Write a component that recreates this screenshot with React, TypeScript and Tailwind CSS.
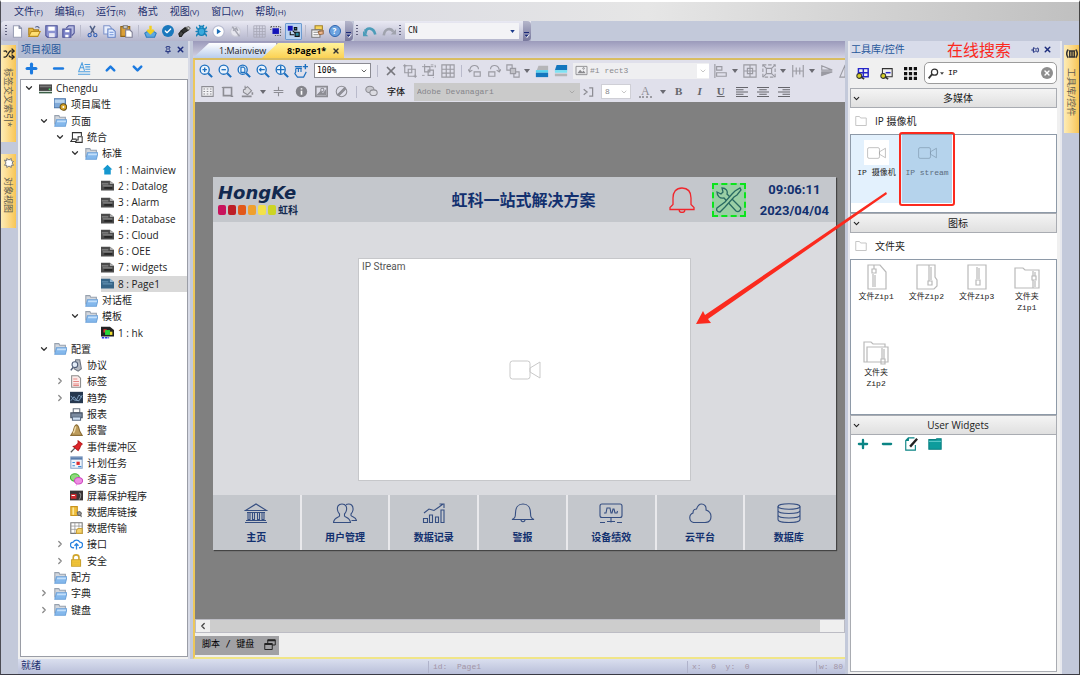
import React from 'react'
import {
  Bug,
  Check,
  ChevronDown,
  ChevronRight,
  ChevronUp,
  Minus,
  Pin,
  Plus,
  Shuffle,
  X,
} from 'lucide-react'

type IconProps = { className?: string; children?: React.ReactNode; box?: string }

// 16x16 drawing with stroke defaults, used by nearly every small icon
const Svg = ({ className = 'size-[13px]', children, box = '0 0 16 16' }: IconProps) => (
  <svg viewBox={box} className={`shrink-0 ${className}`} fill="none" stroke="currentColor" strokeWidth="1.3" aria-hidden="true">
    {children}
  </svg>
)

const ToolButton = ({ label, children, className = '' }: { label: string; children: React.ReactNode; className?: string }) => (
  <button type="button" aria-label={label} className={`flex shrink-0 items-center justify-center ${className}`}>
    {children}
  </button>
)

const Divider = () => <span className="mx-px h-3 w-px shrink-0 bg-[#b9bacb]" />

const Grip = () => (
  <span className="h-3 w-[2px] shrink-0 bg-[repeating-linear-gradient(to_bottom,#62637f_0_1px,transparent_1px_3px)]" />
)

const Caret = () => (
  <svg viewBox="0 0 6 4" className="h-1 w-[6px] shrink-0 fill-[#6b6b72]" aria-hidden="true">
    <path d="M0 0h6L3 4z" />
  </svg>
)

const Overflow = () => (
  <button type="button" aria-label="Toolbar options" className="flex h-5 w-2 shrink-0 items-end justify-center rounded-r-sm bg-gradient-to-b from-[#b5b6cb] to-[#77779c] pb-[3px]">
    <svg viewBox="0 0 6 6" className="size-[6px]" aria-hidden="true">
      <path d="M0 0h5v1H0zM0 2.500h6L3 6z" fill="#fff" />
      <path d="M0 0h5v1H0zM0 2.500h5L2.500 5z" fill="#1b2a78" />
    </svg>
  </button>
)

/* ---------- menu and main toolbar ---------- */

const menus = [
  ['文件', '(F)'],
  ['编辑', '(E)'],
  ['运行', '(R)'],
  ['格式', ''],
  ['视图', '(V)'],
  ['窗口', '(W)'],
  ['帮助', '(H)'],
]

const MenuBar = () => (
  <nav className="flex h-[19px] shrink-0 items-center gap-3 bg-gradient-to-r from-[#cfd0df] via-[#e6e6e6] via-60% to-[#c0c0c0] pl-[5px] text-[10px] text-[#23306f]">
    <span className="-mr-1">
      <Grip />
    </span>
    {menus.map(([name, key]) => (
      <button key={name} type="button" className="whitespace-nowrap">
        {name}
        <span className="text-[8px]">{key}</span>
      </button>
    ))}
  </nav>
)

const fileTools: (string | [string, React.ReactNode])[] = [
  ['New', <Svg><path d="M3 1h7l3 3v11H3z" fill="#fff" stroke="#9a9fb5" /><path d="M10 1v3h3" stroke="#6d7492" /></Svg>],
  ['Open', <Svg><path d="M1 13V4h5l1 2h6v3" fill="#e9b93f" stroke="#a87d18" /><path d="M1 14l3-6h11l-3 6z" fill="#ffdf73" stroke="#b98b1d" /><path d="M9 3c2-2 4-1 5 1" stroke="#5b6a94" /></Svg>],
  ['Save', <Svg><path d="M1 1h14v14H3l-2-2z" fill="#8c93d2" stroke="#4b5196" /><path d="M4 2h8v5H4z" fill="#fff" stroke="none" /><path d="M5 10h7v5H5z" fill="#e8e8f4" stroke="none" /></Svg>],
  ['Save all', <Svg><path d="M5 4l3-3h7v9l-3 3" fill="#b7bbe2" stroke="#4b5196" /><path d="M1 5h10v10H1z" fill="#7d84c8" stroke="#4b5196" /><path d="M4 6h5v3H4zM4 12h4v3H4z" fill="#fff" stroke="none" /></Svg>],
  '|',
  ['Cut', <Svg><path d="M5 1l5 9M11 1L6 10" stroke="#4f5f86" strokeWidth="1.800" /><circle cx="4.500" cy="12.500" r="2" stroke="#2d5db5" /><circle cx="11.500" cy="12.500" r="2" stroke="#2d5db5" /></Svg>],
  ['Copy', <Svg><path d="M1 1h7l2 2v8H1z" fill="#e8eefc" stroke="#7f93c9" /><path d="M6 5h6l3 3v7H6z" fill="#e3edff" stroke="#6080c6" /><path d="M8 9h5M8 12h5" stroke="#6c8fd8" /></Svg>],
  ['Paste', <Svg><path d="M1 2h11v12H1z" fill="#dba037" stroke="#8f6417" /><path d="M4 1h5v3H4z" fill="#ddd" stroke="#777" /><path d="M7 6h5l3 3v6H7z" fill="#fff" stroke="#7d7d94" /></Svg>],
  '|',
  ['Download', <Svg><path d="M1 10l3-2h8l3 2-2 5H3z" fill="#5fa8de" stroke="#2b7cc0" /><path d="M8 1v8M4 6l4 4 4-4" stroke="#f2cf1d" strokeWidth="3" /></Svg>],
  ['Validate', <span className="flex size-3 items-center justify-center rounded-full bg-[#1a78bd] text-white"><Check className="size-2" strokeWidth={4} /></span>],
  ['Connect', <Svg><path d="M1 11l3-4 3 3-3 4H2z" fill="#444" stroke="#222" /><path d="M4 7l5-4 4 3-6 4z" fill="#333" stroke="#222" /><path d="M10 3l3-1 2 2-2 2z" fill="#ddd" stroke="#777" /></Svg>],
  ['Debug', <Bug className="size-[14px] fill-[#3aa9dc] text-[#1681b8]" strokeWidth={2.5} />],
  ['Run', <Svg><circle cx="8" cy="8" r="7" fill="#fff" stroke="#b5b9cf" /><path d="M6 4.500l5 3.500-5 3.500z" fill="#1a6cb6" stroke="none" /></Svg>],
  ['Stop', <Svg className="size-[13px] text-[#a5a6b2]"><circle cx="8" cy="8" r="6" fill="#e6e6ee" stroke="#c9cad6" /><path d="M4 2l9 12M5 7l4-3 2 3" strokeWidth="2" /></Svg>],
  '|',
  ['Grid', <Svg className="size-[13px] text-[#a8a8b6]"><path d="M1 1h14v14H1zM4.500 1v14M8 1v14M11.500 1v14M1 4.500h14M1 8h14M1 11.500h14" strokeWidth="1" /></Svg>],
  ['Snap', <Svg><path d="M3 4h8v7H3z" fill="#1414b8" stroke="none" /><path d="M1 2h12M13 2v9M6 13h8M1 2v4" stroke="#555" strokeDasharray="1.500 1.500" /></Svg>],
  ['Objects', <span className="flex items-center rounded-[1px] border border-[#6d9bd0] bg-[#b9d3f2] p-px"><Svg><path d="M1 1h6v6H1z" fill="#1414b8" stroke="none" /><path d="M7 7l4 4M4 8v4h5" stroke="#111" /><path d="M10 9h5v5h-5zM9 3h3v3H9z" fill="#2c8aa0" stroke="#111" /></Svg></span>],
  '|',
  ['Properties', <Svg><path d="M5 1h9v5H5z" fill="#f6d45b" stroke="#a3822a" /><path d="M1 6h10v9H1z" fill="#fff" stroke="#777" /><path d="M3 9h6M3 12h6" stroke="#888" /><path d="M9 8l6-1v4l-5 1z" fill="#eeb98f" stroke="#96663f" /></Svg>],
  ['Help', <span className="flex size-3 items-center justify-center rounded-full border border-[#2e63ae] bg-[#6ba2df] text-[8px] font-bold leading-none text-white">?</span>],
]

const MainToolbar = () => (
  <div className="flex h-5 shrink-0 items-center bg-[#c3c9da]">
    <div className="flex h-5 items-center gap-1 rounded-sm bg-gradient-to-b from-[#e9e9f3] to-[#b4b5cc] pl-1">
      <Grip />
      {fileTools.map((tool, i) =>
        typeof tool === 'string' ? (
          <Divider key={i} />
        ) : (
          <ToolButton key={i} label={tool[0]} className="w-[13px]">
            {tool[1]}
          </ToolButton>
        ),
      )}
      <Overflow />
    </div>
    <div className="ml-px flex h-5 items-center gap-1 bg-gradient-to-b from-[#e9e9f3] to-[#b4b5cc] px-[2px]">
      <Grip />
      <ToolButton label="Undo" className="w-[15px]">
        <Svg className="size-[14px] text-[#4c9cb9]"><path d="M3 11V6M3 9c1-5 9-6 11 3" strokeWidth="3" /><path d="M0 8v6h6z" fill="currentColor" stroke="none" /></Svg>
      </ToolButton>
      <ToolButton label="Redo" className="w-[15px]">
        <Svg className="size-[14px] text-[#a0a3ad]"><path d="M2 13c1-8 8-9 11-4" strokeWidth="3" /><path d="M16 6v6h-6z" fill="currentColor" stroke="none" /></Svg>
      </ToolButton>
    </div>
    <div className="flex h-5 items-center gap-1 bg-gradient-to-b from-[#e9e9f3] to-[#b4b5cc] pl-px">
      <Grip />
      <label className="flex h-4 w-[114px] items-center bg-[#f3f3f6] pr-1">
        <select aria-label="Language" className="min-w-0 flex-1 appearance-none pl-[3px] font-['DejaVu_Sans_Mono',monospace] text-[8px] text-[#222] outline-none">
          <option>CN</option>
        </select>
        <svg viewBox="0 0 6 4" className="h-[3px] w-[5px] fill-[#1b3a8a]" aria-hidden="true"><path d="M0 0h6L3 4z" /></svg>
      </label>
      <Overflow />
    </div>
  </div>
)

/* ---------- project tree ---------- */

const Folder = () => (
  <Svg><path d="M1 13V2h5l1 2h7v4" fill="#d3d7dd" stroke="#97a1ae" /><path d="M3 7h13l-2 8H1z" fill="#84b8ec" stroke="#6ea3da" /><path d="M4 8h11l-.5 2h-11z" fill="#c3dffa" stroke="none" /></Svg>
)
const Server = () => (
  <Svg><path d="M0 3h16v8H0z" fill="#444" stroke="none" /><path d="M1 4.500h14v2H1z" fill="#777" stroke="none" /><path d="M0 12h16v2H0z" fill="#3c5f48" stroke="none" /><path d="M12 8h2v2h-2z" fill="#4be36b" stroke="none" /></Svg>
)
const PageProps = () => (
  <Svg><path d="M0 1h14v11H0z" fill="#7fa9d8" stroke="#4a73a6" /><path d="M1 2h12v4H1z" fill="#b8d4ef" stroke="none" /><circle cx="11.500" cy="11" r="4" fill="#d8a72e" stroke="#6b5014" /><circle cx="11.500" cy="11" r="1.200" fill="#fff" stroke="none" /></Svg>
)
const Devices = () => (
  <Svg className="size-[13px] text-[#333]"><path d="M7 13H1l2-3V2h11v4M3 10h5M10 7h5v7H7l1-3h2z" /></Svg>
)
const Home = () => <Svg><path d="M8 2l6 6h-2v6H4V8H2z" fill="#1597cf" stroke="none" /></Svg>
const Screen = () => (
  <Svg><path d="M0 2h11l5 4v8H0z" fill="#4b4b4b" stroke="none" /><path d="M11 2v4h5" fill="#aaa" stroke="none" /><path d="M1 6h8M2 8.500h12" stroke="#a9a9a9" strokeWidth="1" /><path d="M4 11h10" stroke="#222" strokeWidth="2" /></Svg>
)
const ScreenActive = () => (
  <Svg><path d="M0 2h11l5 4v8H0z" fill="#356487" stroke="none" /><path d="M11 2v4h5" fill="#8fb6d4" stroke="none" /><path d="M1 6h8M2 8.500h12" stroke="#7aa6c7" strokeWidth="1" /></Svg>
)
const Template = () => (
  <Svg><path d="M0 1h11l5 4v8H0z" fill="#222" stroke="none" /><path d="M3 4h4v4H3z" fill="#d33" stroke="none" /><path d="M5 5h6v6H5z" fill="#27d53b" stroke="none" /><path d="M11 7h3v4h-3z" fill="#eedb2f" stroke="none" /><path d="M1 14.500h9" stroke="#2b35e0" strokeWidth="2" strokeDasharray="3 1" /></Svg>
)
const Protocol = () => (
  <Svg><path d="M7 1h5l2 11-4 3-5-3z" fill="#b5bac3" stroke="#6e7580" /><circle cx="6" cy="7" r="3.500" fill="#e4edf8" stroke="#4e5c77" /><path d="M4 10l-3 4" stroke="#4e5c77" strokeWidth="2" /></Svg>
)
const TagDoc = () => (
  <Svg><path d="M2 1h8l3 3v11H2z" fill="#fbeceb" stroke="#8d8d8d" /><path d="M4 5h5M4 8h7M4 11h7M4 13h7" stroke="#e58683" /></Svg>
)
const Trend = () => (
  <Svg><path d="M0 1h16v14H0z" fill="#26384f" stroke="none" /><path d="M1 12l4-5 3 4 3-6 4 3M1 6l4 5 6 1 4-7" stroke="#8fb2d4" strokeWidth="1" /></Svg>
)
const Printer = () => (
  <Svg><path d="M4 1h8v5H4z" fill="#fff" stroke="#67717f" /><path d="M1 6h14v6H1z" fill="#7b8ba0" stroke="#455163" /><path d="M3 11h10v4H3z" fill="#cfe0f4" stroke="#5b6c84" /></Svg>
)
const BrassBell = () => (
  <Svg><path d="M8 1c3 1 3 5 4 8l3 5H1l3-5c1-3 1-7 4-8z" fill="#bd9c5b" stroke="#8d6f38" /><path d="M7 3c-1 3-1 6-3 8" stroke="#f0dcaa" strokeWidth="1.800" /></Svg>
)
const RedPin = () => (
  <Svg><path d="M10 1l5 4-2 2-1 3-2 3-6-5 3-1 3-3z" fill="#e0262b" stroke="#b8191d" /><path d="M6 10l-5 5" stroke="#555" strokeWidth="1.600" /></Svg>
)
const Schedule = () => (
  <Svg><path d="M1 1h14v14H1z" fill="#eef4fc" stroke="#8ba4c8" /><path d="M1 3h14" stroke="#5c7fae" strokeWidth="3" /><path d="M3 8h3M3 12h3M10 13h4" stroke="#3c8cd8" strokeWidth="1.500" /><path d="M8 7h4v4H8z" fill="#df2b2b" stroke="none" /></Svg>
)
const Chat = () => (
  <Svg><ellipse cx="6" cy="5.500" rx="5.500" ry="4.500" fill="#8fd97e" stroke="#3fb52f" /><ellipse cx="10.500" cy="9.500" rx="5" ry="4" fill="#ee8ee3" stroke="#cc49bd" /><path d="M8 13l-1 3 4-3" fill="#ee8ee3" stroke="none" /></Svg>
)
const Saver = () => (
  <Svg><path d="M0 2h16v12H0z" fill="#3a3435" stroke="none" /><path d="M1 6h7v6H1z" fill="#cf2b2e" stroke="none" /><path d="M2 8h4" stroke="#fff" /><path d="M11 5c3 0 3 5 0 8" stroke="#8b8b8b" /></Svg>
)
const DbLink = () => (
  <Svg><path d="M1 2h8v11H1z" fill="#f0bf3d" stroke="#c9941d" /><path d="M3 3h2v9H3z" fill="#fbe69c" stroke="none" /><path d="M9 9l3-1 2 2-1 3h-3z" fill="#999" stroke="#666" /><path d="M13 12l1 3" stroke="#666" /></Svg>
)
const Transfer = () => (
  <Svg><path d="M1 1h14v13H1z" fill="#fff" stroke="#777" /><path d="M1 5h14M6 1v13M11 1v6M1 9h8" stroke="#999" strokeWidth="1" /><path d="M8 10l2-2h5v6H8z" fill="#f5d36c" stroke="#c9a03a" /></Svg>
)
const CloudUp = () => (
  <Svg className="size-[13px] text-[#2b84e0]"><path d="M5 12H4a3.500 3.500 0 0 1 0-7 4.500 4.500 0 0 1 8 0 3.500 3.500 0 0 1 0 7h-1M8 14V7M5.500 9.500L8 7l2.500 2.500" strokeWidth="1.600" /></Svg>
)
const Lock = () => (
  <Svg><path d="M4 8V4c0-4 7-4 7 0v4" stroke="#d0a52b" strokeWidth="2" /><path d="M2 7h11v8H2z" fill="#f5c83a" stroke="#c9a02c" /><path d="M3 10h9M3 12.500h9" stroke="#e0b535" strokeWidth="1" /></Svg>
)

type Node = { level: 0 | 1 | 2 | 3 | 4; label: string; icon: React.ReactNode; open?: boolean; active?: boolean }

const tree: Node[] = [
  { level: 0, label: 'Chengdu', icon: <Server />, open: true },
  { level: 1, label: '项目属性', icon: <PageProps /> },
  { level: 1, label: '页面', icon: <Folder />, open: true },
  { level: 2, label: '统合', icon: <Devices />, open: true },
  { level: 3, label: '标准', icon: <Folder />, open: true },
  { level: 4, label: '1 : Mainview', icon: <Home /> },
  { level: 4, label: '2 : Datalog', icon: <Screen /> },
  { level: 4, label: '3 : Alarm', icon: <Screen /> },
  { level: 4, label: '4 : Database', icon: <Screen /> },
  { level: 4, label: '5 : Cloud', icon: <Screen /> },
  { level: 4, label: '6 : OEE', icon: <Screen /> },
  { level: 4, label: '7 : widgets', icon: <Screen /> },
  { level: 4, label: '8 : Page1', icon: <ScreenActive />, active: true },
  { level: 3, label: '对话框', icon: <Folder /> },
  { level: 3, label: '模板', icon: <Folder />, open: true },
  { level: 4, label: '1 : hk', icon: <Template /> },
  { level: 1, label: '配置', icon: <Folder />, open: true },
  { level: 2, label: '协议', icon: <Protocol /> },
  { level: 2, label: '标签', icon: <TagDoc />, open: false },
  { level: 2, label: '趋势', icon: <Trend />, open: false },
  { level: 2, label: '报表', icon: <Printer /> },
  { level: 2, label: '报警', icon: <BrassBell /> },
  { level: 2, label: '事件缓冲区', icon: <RedPin /> },
  { level: 2, label: '计划任务', icon: <Schedule /> },
  { level: 2, label: '多语言', icon: <Chat /> },
  { level: 2, label: '屏幕保护程序', icon: <Saver /> },
  { level: 2, label: '数据库链接', icon: <DbLink /> },
  { level: 2, label: '数据传输', icon: <Transfer /> },
  { level: 2, label: '接口', icon: <CloudUp />, open: false },
  { level: 2, label: '安全', icon: <Lock />, open: false },
  { level: 1, label: '配方', icon: <Folder /> },
  { level: 1, label: '字典', icon: <Folder />, open: false },
  { level: 1, label: '键盘', icon: <Folder />, open: false },
]

const indent = ['pl-[3px]', 'pl-[18px]', 'pl-[34px]', 'pl-[49px]', 'pl-[65px]']

const TreeRow = ({ node }: { node: Node }) => (
  <li className={`flex min-h-4 flex-1 items-center ${indent[node.level]}`}>
    <span className="flex w-[15px] shrink-0 items-center">
      {node.open === true && <ChevronDown className="size-[10px] text-[#333]" strokeWidth={3} />}
      {node.open === false && <ChevronRight className="size-[10px] text-[#888]" strokeWidth={3} />}
    </span>
    <a href="#" className={`flex flex-1 items-center gap-1 self-stretch whitespace-nowrap ${node.active ? 'bg-[#d9d9d9]' : ''}`}>
      {node.icon}
      {node.label}
    </a>
  </li>
)

const ProjectPanel = () => (
  <aside className="flex w-[172px] shrink-0 flex-col border-r-2 border-[#d8dbe6] bg-[#f0f0f0]">
    <header className="flex h-[17px] shrink-0 items-center bg-[#b3bcd3] px-[3px] text-[10px] text-[#25569a]">
      <h2 className="flex-1">项目视图</h2>
      <ToolButton label="Pin" className="mr-1"><Pin className="size-2 text-[#1c2c7c]" strokeWidth={3} /></ToolButton>
      <ToolButton label="Close"><X className="size-[9px] text-[#1c2c7c]" strokeWidth={4} /></ToolButton>
    </header>
    <div className="flex h-[21px] shrink-0 items-center gap-3 pl-[6px] text-[#1b7ae0]">
      <ToolButton label="Add"><Plus className="size-[15px]" strokeWidth={5} /></ToolButton>
      <ToolButton label="Remove"><Minus className="size-[15px]" strokeWidth={4} /></ToolButton>
      <ToolButton label="Rename">
        <Svg className="size-[13px] text-[#4d9ee0]"><path d="M1 11L5 1l3 10M3 7h4M8 3h7M9 6h6M9 9h6M0 12h15M0 15h15" /></Svg>
      </ToolButton>
      <ToolButton label="Up"><ChevronUp className="size-[15px]" strokeWidth={4} /></ToolButton>
      <ToolButton label="Down"><ChevronDown className="size-[15px]" strokeWidth={4} /></ToolButton>
    </div>
    <ul className="mb-[2px] ml-[2px] flex flex-1 flex-col border border-[#9a9da6] bg-white pb-[38px] text-[10px] leading-4 text-[#222]">
      {tree.map((node) => (
        <TreeRow key={node.label} node={node} />
      ))}
    </ul>
  </aside>
)

/* ---------- editor toolbars ---------- */

const Lens = ({ children }: { children?: React.ReactNode }) => (
  <Svg className="size-[14px] text-[#1c6fbf]">
    <circle cx="6.500" cy="6.500" r="5.200" fill="#eaf3fc" strokeWidth="1.500" />
    <path d="M10.500 10.500L15 15" strokeWidth="2.400" />
    {children}
  </Svg>
)

const zoomTools: [string, React.ReactNode][] = [
  ['Zoom in', <Lens><path d="M6.500 4v5M4 6.500h5" strokeWidth="1.500" /></Lens>],
  ['Zoom out', <Lens><path d="M4 6.500h5" strokeWidth="1.500" /></Lens>],
  ['Zoom page', <Lens><path d="M4.500 3.500h3l1.500 1.500v4.500H4.500z" /></Lens>],
  ['Previous zoom', <Lens><path d="M10 6.500H4M6 4.500l-2 2 2 2" /></Lens>],
  ['Zoom selection', <Lens><path d="M6.500 2v9M2 6.500h9" strokeWidth="1.500" /></Lens>],
  ['Pan', <Svg className="size-[14px] text-[#1c6fbf]"><path d="M1 3h8M2 5v4l-1 2 3 4h7l3-6M5 5v4M8 5v4M2 5h7M4 15h7" /><path d="M13 0v6M10 3h6" strokeWidth="1.600" /></Svg>],
]

const EditorRowOne = () => (
  <div className="flex h-[21px] items-center gap-[5px] overflow-hidden pl-1 text-[#9a9aa2]">
    <div className="flex gap-[5px]">
      {zoomTools.map(([label, icon]) => (
        <ToolButton key={label} label={label}>{icon}</ToolButton>
      ))}
    </div>
    <label className="ml-px flex h-[15px] w-[57px] shrink-0 items-center border border-[#8b8b93] bg-white pr-[2px]">
      <select aria-label="Zoom level" className="min-w-0 flex-1 appearance-none pl-[2px] font-['DejaVu_Sans_Mono',monospace] text-[8px] text-black outline-none">
        <option>100%</option>
      </select>
      <ChevronDown className="size-2 text-[#444]" strokeWidth={2.5} />
    </label>
    <Divider />
    <div className="flex gap-[5px]">
      <ToolButton label="Delete"><X className="size-[14px] text-[#77777d]" strokeWidth={3} /></ToolButton>
      <ToolButton label="Group"><Svg className="size-[14px]"><path d="M2 2h8v8H2zM6 6h8v8H6z" /><path d="M0 2h4M2 0v4M12 14h4M14 12v4" strokeWidth="1" /></Svg></ToolButton>
      <ToolButton label="Ungroup"><Svg className="size-[14px]"><path d="M3 3h6v6H3zM7 7h6v6H7z" /><path d="M0 3h16M3 0v6M13 10v6M0 13h4M10 1h5v4" strokeWidth="1" strokeDasharray="3 2" /></Svg></ToolButton>
      <ToolButton label="Table"><Svg className="size-[14px]"><path d="M1 1h14v14H1zM6 1v14M10.500 1v14M1 6h14M1 10.500h14" /></Svg></ToolButton>
    </div>
    <Divider />
    <div className="flex gap-[5px]">
      <ToolButton label="Rotate left"><Svg className="size-[14px]"><path d="M2 8c0-8 10-8 10-2M0 6l2 3 3-2M7 9h7v5H7z" /></Svg></ToolButton>
      <ToolButton label="Rotate right"><Svg className="size-[14px]"><path d="M14 8c0-8-10-8-10-2M16 6l-2 3-3-2M2 9h7v5H2z" /></Svg></ToolButton>
    </div>
    <ToolButton label="Order" className="gap-1"><Svg className="size-[14px]"><path d="M1 1h6v6H1zM9 9h6v6H9z" /><path d="M5 5h6v6H5z" fill="#c2c2c8" /></Svg><Caret /></ToolButton>
    <div className="flex gap-[5px]">
      <ToolButton label="Bring to front"><Svg className="size-[14px]"><path d="M4 2h11v5H2z" fill="#b5b5b8" stroke="none" /><path d="M1 7h14v3H1z" fill="#55d3ee" stroke="none" /><path d="M1 10h14v5H1z" fill="#1477be" stroke="none" /></Svg></ToolButton>
      <ToolButton label="Send to back"><Svg className="size-[14px]"><path d="M3 1h12v6H1z" fill="#1477be" stroke="none" /><path d="M1 7h14v3H1z" fill="#7fe2f2" stroke="none" /><path d="M1 11h14v3H1z" fill="#b5b5b8" stroke="none" /></Svg></ToolButton>
    </div>
    <label className="flex h-4 w-[136px] shrink-0 items-center bg-[#efeff1] pl-[2px]">
      <Svg className="h-[11px] w-[13px] text-[#8a8a8e]"><path d="M0 2h16v12H0z" /><path d="M2 12l4-5 3 3 2-2 3 4z" fill="currentColor" stroke="none" /><circle cx="11" cy="5" r="1.200" /></Svg>
      <select aria-label="Widget" className="min-w-0 flex-1 appearance-none pl-[2px] font-['Liberation_Mono',monospace] text-[8px] text-[#8a8a8e] outline-none">
        <option>#1 rect3</option>
      </select>
      <span className="flex h-[14px] w-3 items-center justify-center bg-white"><ChevronDown className="size-2 text-[#aaa]" /></span>
    </label>
    <ToolButton label="Align" className="gap-1"><Svg className="size-[14px]"><path d="M1 0v16M3 3h6v4H3zM3 10h11v4H3z" /></Svg><Caret /></ToolButton>
    <div className="flex gap-[5px]">
      <ToolButton label="Center"><Svg className="size-[14px]"><path d="M1 1h14v14H1zM8 1v14M1 8h14M5 5h6v6H5z" /></Svg></ToolButton>
      <ToolButton label="Same size" className="gap-1"><Svg className="size-[14px]"><path d="M1 1h14v14H1z" strokeDasharray="4 2" /><path d="M5 5h6v6H5zM1 1l4 4M15 1l-4 4M1 15l4-4M15 15l-4-4" /></Svg><Caret /></ToolButton>
    </div>
    <ToolButton label="Spacing" className="gap-1"><Svg className="size-[14px]"><path d="M2 1v14M6 4v8M10 4v8M14 1v14M2 8h12" /></Svg><Caret /></ToolButton>
    <ToolButton label="Flip horizontal"><Svg className="size-[14px]"><path d="M2 2l12 5H2z" /><path d="M2 13l12-4H2z" fill="currentColor" /></Svg></ToolButton>
    <ToolButton label="Flip vertical"><Svg className="size-[14px]"><path d="M7 1v14H1zM10 1v14h5z" /></Svg></ToolButton>
  </div>
)

const Lines = ({ d }: { d: string }) => (
  <Svg className="size-3 text-[#66666c]"><path d={d} strokeWidth="1.500" /></Svg>
)

const EditorRowTwo = () => (
  <div className="flex h-[21px] items-center gap-[7px] overflow-hidden pl-[6px] text-[#8d8d94]">
    <ToolButton label="Grid"><Svg><path d="M1 2h14v12H1z" fill="#f2f2f5" /><path d="M3 5h10M3 8h10M3 11h10" strokeDasharray="2 2" /></Svg></ToolButton>
    <ToolButton label="Shape"><Svg><path d="M3 3h10v10H3z" strokeWidth="2" /><path d="M1 3h3M12 14h3" /></Svg></ToolButton>
    <ToolButton label="Fill" className="gap-[6px]"><Svg><path d="M3 6l5-4 5 5-5 5-5-3zM5 1v5" fill="#dadadf" /><path d="M14 9v3M1 14h12" strokeWidth="2" /></Svg><Caret /></ToolButton>
    <ToolButton label="Line"><Svg className="size-[11px]"><path d="M1 6.500h14M1 9.500h14M8 1v5M8 10v5" strokeWidth="1.600" /></Svg></ToolButton>
    <ToolButton label="Info" className="ml-1"><Svg><circle cx="8" cy="8" r="7" fill="#85858c" stroke="none" /><path d="M8 7v5M8 4v1.500" stroke="#fff" strokeWidth="2" /></Svg></ToolButton>
    <ToolButton label="Image"><Svg><path d="M1 2h14v12H1z" strokeWidth="2" /><path d="M3 12l4-4 3 3 3-4v5z" fill="currentColor" /><circle cx="9" cy="6" r="2" /></Svg></ToolButton>
    <ToolButton label="Hide"><Svg><circle cx="8" cy="8" r="6.500" /><path d="M3 12L12 3l1 2-8 8z" fill="currentColor" /></Svg></ToolButton>
    <Divider />
    <ToolButton label="Language"><Svg><ellipse cx="6" cy="5.500" rx="5" ry="4" fill="#c9c9cf" /><ellipse cx="10.500" cy="9.500" rx="4.500" ry="3.500" fill="#dcdce2" /></Svg></ToolButton>
    <label htmlFor="font" className="mx-[2px] shrink-0 text-[9px] font-medium text-[#222]">字体</label>
    <div className="flex h-[18px] w-[166px] shrink-0 items-center bg-[#cacaca] pr-1">
      <select id="font" className="min-w-0 flex-1 appearance-none pl-[3px] font-['Liberation_Mono',monospace] text-[8px] text-[#85858a] outline-none">
        <option>Adobe Devanagari</option>
      </select>
      <ChevronDown className="size-2 text-[#999]" />
    </div>
    <ToolButton label="Font size" className="-ml-1"><Svg className="h-3 w-[11px]"><path d="M1 4l5 4-5 4M9 2h5v12H9" strokeWidth="1.800" /></Svg></ToolButton>
    <label className="flex h-[15px] w-[30px] shrink-0 items-center border border-[#cfcfd6] bg-white pr-[2px]">
      <select aria-label="Size" className="min-w-0 flex-1 appearance-none pl-[3px] font-['Liberation_Mono',monospace] text-[8px] text-[#85858a] outline-none">
        <option>8</option>
      </select>
      <ChevronDown className="size-2 text-[#aaa]" />
    </label>
    <ToolButton label="Text color" className="ml-px gap-2 font-['Liberation_Serif',serif] text-[12px]">
      <span className="border-b-2 border-dotted border-[#9c9ca3] px-[2px] leading-[10px]">A</span>
      <Caret />
    </ToolButton>
    <div className="flex items-center gap-[9px] font-['Liberation_Serif',serif] text-[11px] font-bold text-[#66666c]">
      <ToolButton label="Bold" className="w-3">B</ToolButton>
      <ToolButton label="Italic" className="w-3 italic">I</ToolButton>
      <ToolButton label="Underline" className="w-3 underline">U</ToolButton>
      <ToolButton label="Align left"><Lines d="M0 2h16M0 5h10M0 8h16M0 11h10M0 14h16" /></ToolButton>
      <ToolButton label="Align center"><Lines d="M0 2h16M3 5h10M0 8h16M3 11h10M0 14h16" /></ToolButton>
      <ToolButton label="Align right"><Lines d="M0 2h16M6 5h10M0 8h16M6 11h10M0 14h16" /></ToolButton>
    </div>
  </div>
)

/* ---------- designed page ---------- */

const squares = ['bg-[#c8145c]', 'bg-[#bd1f27]', 'bg-[#e2591b]', 'bg-[#efa02e]', 'bg-[#f3e14a]', 'bg-[#ccd424]']

const Thin = ({ children }: { children: React.ReactNode }) => (
  <svg viewBox="0 0 24 20" className="h-5 w-6 opacity-80" fill="none" stroke="currentColor" strokeWidth="1.100" aria-hidden="true">
    {children}
  </svg>
)

const navTiles: [string, React.ReactNode][] = [
  ['主页', <Thin><path d="M1.500 7.500L12 1l10.500 6.500zM1 19.500h22M2 17.500h20M3 9.500h18M4 9.500v7h2v-7M8.500 9.500v7h2v-7M13.500 9.500v7h2v-7M18 9.500v7h2v-7" /></Thin>],
  ['用户管理', <Thin><path d="M9 1c-4 0-5 3-4.500 6 .3 2 1 3 2 4v2c-1 1.500-5.500 1.500-6 6.500h17c-.5-5-5-5-6-6.500v-2c1-1 1.700-2 2-4C14 4 13 1 9 1z" /><path d="M13 1.500c5-1.500 7.500 1 7 5.500-.3 2-1 3-2 4v1.500c1 1.500 5 1.500 5.500 5h-5" /></Thin>],
  ['数据记录', <Thin><path d="M1.500 15.500h4v4h-4zM7.500 12h3v7.500h-3zM13.500 14h3v5.500h-3zM19 7h3v12.500h-3zM2 10l5-4 5 1.500 5-3.500 4-3M17.500 1H22v4" /></Thin>],
  ['警报', <Thin><path d="M1 16.500c2.500-1 3.500-2 3.500-6.500C4.500 5 7 1 12 1s7.500 4 7.500 9c0 4.500 1 5.500 3.500 6.500zM10 16.500c0 3 4 3 4 0" /></Thin>],
  ['设备绩效', <Thin><rect x="1" y="1" width="22" height="13.500" rx="2" /><path d="M5 10h2l1-5h3l1 5h1l1-4h1l1 4h2l.5-2M12 14.500v5M8 18.500h8M1 19.500h5M18 19.500h5" /></Thin>],
  ['云平台', <Thin><path d="M5.500 19.500a5 5 0 0 1-.5-9.500c0-2.500 1.500-4 3.500-4C10 2 12 1 13.500 1c3 0 5 2.500 4.500 6 3 1 5 3 5 6.500 0 4-2.500 6-6 6z" /></Thin>],
  ['数据库', <Thin><ellipse cx="12" cy="3.500" rx="11" ry="2.700" /><path d="M1 3.500v13c0 4 22 4 22 0v-13M1 7.500c0 4 22 4 22 0M1 12c0 4 22 4 22 0" /></Thin>],
]

const Camera = ({ className }: { className: string }) => (
  <svg viewBox="0 0 32 20" className={className} fill="none" stroke="currentColor" aria-hidden="true">
    <rect x="1" y="1" width="20" height="18" rx="2.500" />
    <path d="M21 8l10-6v16l-10-6z" strokeLinejoin="round" />
  </svg>
)

const DesignedPage = () => (
  <section className="mr-[9px] ml-[18px] flex flex-col bg-[#dadbdf] text-[#12306f] shadow-[1px_1px_1px_#444]">
    <header className="flex h-[45px] items-center bg-[#c4c7cc] pl-[5px]">
      <div className="flex flex-1 flex-col gap-[2px] text-[#12294f]">
        <span className="font-['DejaVu_Sans',sans-serif] text-[18px] leading-[18px] font-bold italic">HongKe</span>
        <div className="flex items-center gap-[2px]">
          {squares.map((color) => (
            <span key={color} className={`h-[10px] w-2 rounded-[2px] ${color}`} />
          ))}
          <span className="text-[10px] leading-[12px] font-bold">虹科</span>
        </div>
      </div>
      <h1 className="text-[16px] font-bold">虹科一站式解决方案</h1>
      <div className="flex flex-1 items-center justify-end pr-[7px]">
        <svg viewBox="0 0 26 26" className="size-[26px] text-[#f0262c]" fill="none" stroke="currentColor" strokeWidth="1.300" aria-hidden="true">
          <path d="M1 22.500v-2l3-3V11c0-6 3-10 9-10s9 4 9 10v6.500l3 3v2zM10 22.500c0 4 6 4 6 0" />
        </svg>
        <div className="ml-[17px] flex size-[34px] items-center justify-center border-2 border-dashed border-[#0be41c] bg-[#9bcfa5]">
          <svg viewBox="0 0 26 26" className="size-[26px] text-[#2a6a63]" fill="none" stroke="currentColor" strokeWidth="1.300" aria-hidden="true">
            <path d="M1 5l4 2 2-2-1-4c4 0 6 3 5 6l13 13c2 2-1 6-4 4L8 11C4 12 1 9 1 5z" />
            <path d="M24 1l1 2-4 5-3 2-9 10-5 5c-3 0-4-2-3-4l8-6 7-8 3-3z" fill="#9bcfa5" />
          </svg>
        </div>
        <div className="ml-[14px] text-center font-['Roboto',sans-serif] text-[13px] leading-[21px] font-bold">
          <p>09:06:11</p>
          <p>2023/04/04</p>
        </div>
      </div>
    </header>
    <div className="px-[145px] pt-9 pb-[14px]">
      <div className="flex h-[223px] flex-col border border-[#c6c7ca] bg-white text-[#c9c9c9]">
        <p className="h-4 px-[3px] font-['Roboto',sans-serif] text-[10px] leading-4 text-[#555]">IP Stream</p>
        <div className="flex flex-1 items-center justify-center pb-4">
          <Camera className="h-5 w-8" />
        </div>
      </div>
    </div>
    <nav className="flex h-[55px] bg-[#c4c7cc] pr-1">
      {navTiles.map(([label, icon]) => (
        <a key={label} href="#" className="flex flex-1 flex-col items-center gap-[6px] border-r-2 border-[#e9e9ec] pt-2 text-[10px] leading-4 font-bold last:border-r-0">
          {icon}
          {label}
        </a>
      ))}
    </nav>
  </section>
)

const Editor = () => (
  <main className="flex min-w-0 flex-1 flex-col">
    <div className="flex h-[17px] shrink-0 items-end bg-gradient-to-b from-[#9b9abb] to-[#d5d4e4] text-[9px] leading-[15px]">
      <button type="button" className="h-[15px] w-[83px] bg-gradient-to-b from-white to-[#b9cdec] pl-[26px] text-left text-[#222] [clip-path:polygon(16px_0,100%_0,100%_100%,0_100%)]">
        1:Mainview
      </button>
      <div className="-ml-[14px] flex h-[15px] w-[82px] items-center justify-between bg-gradient-to-b from-[#fff39a] to-[#fbd152] pr-1 pl-[25px] [clip-path:polygon(16px_0,100%_0,100%_100%,0_100%)]">
        <button type="button" className="font-bold text-black">8:Page1*</button>
        <ToolButton label="Close tab"><X className="size-2 text-[#333]" strokeWidth={4} /></ToolButton>
      </div>
    </div>
    <div className="flex min-h-0 flex-1 flex-col border-y-2 border-l-2 border-t-[#d9bd62] border-b-[#f0e588] border-l-[#ecc75a] bg-[#efefef]">
      <div className="bg-[#e0e0eb]">
        <EditorRowOne />
        <EditorRowTwo />
      </div>
      <div className="flex-1 bg-[#808080] pt-[75px]">
        <DesignedPage />
      </div>
      <div className="flex h-[14px] shrink-0 items-center border border-[#bcbcc4] bg-[#efefef] pr-6">
        <ToolButton label="Scroll left" className="w-[14px]"><ChevronRight className="size-[10px] rotate-180 text-[#444]" strokeWidth={3} /></ToolButton>
        <span className="h-full flex-1 bg-[#cdcdcd]" />
      </div>
      <div className="flex h-6 shrink-0 items-center">
        <button type="button" className="flex h-[19px] items-center gap-[10px] bg-[#a1a1a4] pr-[3px] pl-[7px] font-['DejaVu_Sans_Mono','Noto_Sans_CJK_SC',monospace] text-[9px] text-black">
          脚本 / 键盘
          <Svg className="size-3 text-[#222]"><path d="M5 6V1h10v7h-4M1 6h10v8H1z" /><path d="M1 7h10M5 2h10" strokeWidth="2" /></Svg>
        </button>
      </div>
    </div>
  </main>
)

/* ---------- widget gallery ---------- */

const galleryIcons: [string, React.ReactNode][] = [
  ['文件Zip1', <path d="M5 1h12l6 7v17H5zM11 1v4M9 5h4v4H9zM10 10v13M12 11v12" />],
  ['文件Zip2', <path d="M4 1h18v12l2 3v6l-3 3H4zM16 1v16M18 3v13M15 17h4v4h-4z" />],
  ['文件Zip3', <path d="M4 1h18v24H4zM13 3v12M15 4v11M12 16h4v5h-4z" />],
  ['文件夹Zip1', <path d="M1 4h8l2 2h14v18H1zM19 7v5M21 8v4M18 12h4v4h-4zM19 16v8M21 17v6" />],
  ['文件夹Zip2', <path d="M5 22H1V2h7l2 2h12v3M4 7h21v15H4zM19 8v11M21 9v10M18 19h4v5h-4z" />],
]

const SectionHeader = ({ title }: { title: string }) => (
  <button type="button" className="flex h-5 w-full shrink-0 items-center border border-[#a9acb2] bg-gradient-to-b from-[#f4f4f4] to-[#e0e0e0] px-px text-[10px] text-[#222]">
    <ChevronDown className="size-[9px]" strokeWidth={3} />
    <span className="flex-1">{title}</span>
  </button>
)

const Category = ({ name }: { name: string }) => (
  <div className="flex h-[26px] shrink-0 items-center gap-2 bg-white pl-[5px] text-[10px] text-[#222]">
    <Svg className="size-3 text-[#c4c4c4]"><path d="M1 2h5l1.500 2H15v10H1z" /></Svg>
    {name}
  </div>
)

const Gallery = () => (
  <aside className="relative flex w-[214px] shrink-0 flex-col border-x-2 border-[#e8e9ee] bg-[#f0f0f0] pr-[3px] pb-[2px]">
    <header className="-mr-[3px] flex h-[17px] shrink-0 items-center bg-[#d8dcea] pr-[5px] pl-px text-[10px] text-[#25569a]">
      <h2 className="w-24">工具库/控件</h2>
      <span className="flex-1 text-[16px] leading-4 text-[#fb2a1e]">在线搜索</span>
      <ToolButton label="Pin" className="mr-1"><Pin className="size-2 rotate-90 text-[#1c2c7c]" strokeWidth={3} /></ToolButton>
      <ToolButton label="Close" className="mr-[3px]"><X className="size-[9px] text-[#1c2c7c]" strokeWidth={4} /></ToolButton>
    </header>
    <div className="flex h-[30px] shrink-0 items-center gap-[11px] pl-[6px]">
      <ToolButton label="Expand all">
        <Svg className="size-[13px]"><path d="M3 2h12v10H3zM9 2v10M3 7h12" stroke="#2626c9" strokeWidth="1.800" /><circle cx="4" cy="11" r="3" fill="#d6cf27" stroke="#333" /><path d="M6 12l4 3" stroke="#333" strokeWidth="2" /></Svg>
      </ToolButton>
      <ToolButton label="Collapse all">
        <Svg className="size-[13px]"><path d="M3 2h12v10H3z" stroke="#333" /><path d="M7 7h6" stroke="#2626c9" strokeWidth="1.800" /><circle cx="4" cy="11" r="3" fill="#d6cf27" stroke="#333" /><path d="M6 12l4 3" stroke="#333" strokeWidth="2" /></Svg>
      </ToolButton>
      <ToolButton label="Grid view">
        <Svg className="size-[13px]"><path d="M0 2h16M0 8h16M0 14h16" stroke="#111" strokeWidth="4" strokeDasharray="4 2" /></Svg>
      </ToolButton>
      <label className="-ml-1 flex h-[22px] min-w-0 flex-1 items-center gap-px rounded-[5px] border border-[#9c9c9c] bg-white px-[3px]">
        <Svg className="size-[11px] text-[#333]"><circle cx="9.500" cy="6" r="4.500" strokeWidth="1.800" /><path d="M6 9l-5 6" strokeWidth="2.600" /></Svg>
        <svg viewBox="0 0 6 4" className="h-[3px] w-1 shrink-0 fill-[#444]" aria-hidden="true"><path d="M0 0h6L3 4z" /></svg>
        <input aria-label="Search" defaultValue="IP" className="min-w-0 flex-1 pl-[3px] font-['Liberation_Mono',monospace] text-[8px] text-black outline-none" />
        <ToolButton label="Clear" className="size-3 rounded-full bg-[#8e8e8e] text-white"><X className="size-2" strokeWidth={4} /></ToolButton>
      </label>
    </div>

    <SectionHeader title="多媒体" />
    <Category name="IP 摄像机" />
    <div className="flex h-[79px] shrink-0 border border-[#8e9aa8] bg-white font-['Liberation_Mono','Noto_Sans_CJK_SC',monospace] text-[8px] whitespace-nowrap text-[#222]">
      <button type="button" className="flex h-[68px] w-[51px] flex-col items-center gap-[2px] bg-[#e3f1fd] pt-[5px]">
        <span className="flex size-[25px] items-center justify-center bg-white"><Camera className="h-3 w-[19px] text-[#999]" /></span>
        IP 摄像机
      </button>
      <button type="button" className="relative flex h-[68px] w-[50px] flex-col items-center gap-[2px] bg-[#b5d3ec] pt-[5px] text-[#5b6b7c]">
        <span className="flex size-[25px] items-center justify-center"><Camera className="h-3 w-[19px] text-[#7891a8]" /></span>
        IP stream
        <span className="absolute -inset-[3px] rounded-[3px] border-2 border-[#fb2a1e]" />
      </button>
    </div>

    <SectionHeader title="图标" />
    <Category name="文件夹" />
    <ul className="grid h-[156px] shrink-0 auto-rows-[76px] grid-cols-4 border border-[#8e9aa8] bg-white pt-1 pr-1 font-['Liberation_Mono','Noto_Sans_CJK_SC',monospace] text-[8px] leading-[11px] text-[#222]">
      {galleryIcons.map(([label, drawing]) => (
        <li key={label} className="flex flex-col items-center gap-px text-center">
          <svg viewBox="0 0 26 26" className="size-[26px]" fill="none" stroke="#b9b9b9" strokeWidth="1.200" aria-hidden="true">
            {drawing}
          </svg>
          <span className={label.startsWith('文件夹') ? 'w-6' : ''}>{label}</span>
        </li>
      ))}
    </ul>

    <SectionHeader title="User Widgets" />
    <div className="flex-1 border border-t-0 border-[#a9acb2] bg-white">
      <div className="flex items-center gap-[10px] px-[5px] pt-[2px] text-[#0a8484]">
        <ToolButton label="Add widget"><Plus className="size-[14px]" strokeWidth={4} /></ToolButton>
        <ToolButton label="Remove widget"><Minus className="size-[14px]" strokeWidth={4} /></ToolButton>
        <ToolButton label="Edit widget"><Svg className="size-[14px]"><path d="M13 9v6H2V4l3-3h7M2 4h3V1" /><path d="M7 11l8-9" stroke="#222" strokeWidth="2.600" /></Svg></ToolButton>
        <ToolButton label="Open folder"><Svg className="size-[14px]"><path d="M1 3h8l1-1h5v12H1z" fill="#0d9c9c" stroke="#0a7f80" /><path d="M1 5h14" stroke="#5cc9c9" /></Svg></ToolButton>
      </div>
    </div>

    {/* Arrow from the selected widget to the page */}
    <svg viewBox="0 0 200 144" className="pointer-events-none absolute top-[144px] -left-[161px] h-[144px] w-[200px] fill-[#fb2a1e]" aria-hidden="true">
      <path d="M197 7l1 2L19 134l3 4-15 1 7-13 2 4z" />
    </svg>
  </aside>
)

const SideTab = ({ icon, label, className }: { icon: React.ReactNode; label: string; className: string }) => (
  <button type="button" className={`flex w-[15px] flex-col items-center gap-2 bg-gradient-to-r from-[#fdecb5] to-[#f8c552] pt-[3px] text-[9px] text-[#5c5a50] ${className}`}>
    {icon}
    <span className="leading-[15px] [text-orientation:sideways] [writing-mode:vertical-rl]">{label}</span>
  </button>
)

const StatusBar = () => (
  <footer className="flex h-[15px] shrink-0 items-center bg-gradient-to-b from-[#dadfef] to-[#b9bfd9] font-['Liberation_Mono','Noto_Sans_CJK_SC',monospace] text-[8px] whitespace-pre text-[#a294a6]">
    <span className="flex-1 pl-[3px] text-[10px] text-[#23306f]">就绪</span>
    <span className="w-[130px] border-l border-[#b0b3cb] pl-1">id:  Page1</span>
    <span className="w-[129px] border-l border-[#b0b3cb]" />
    <span className="w-[129px] border-l border-[#b0b3cb] pl-1">x:  0  y:  0</span>
    <span className="border-l border-[#b0b3cb] px-[2px]">w: 80</span>
  </footer>
)

const App = () => {
  return (
    <div className="flex h-screen flex-col overflow-hidden border-t-2 border-r border-b border-l border-t-white border-r-[#444] border-b-[#3a3a44] border-l-[#4c4c54] bg-[#c3c9da] font-['Open_Sans','Noto_Sans_CJK_SC',sans-serif]">
      <MenuBar />
      <MainToolbar />
      <div className="flex min-h-0 flex-1">
        <div className="flex w-[17px] shrink-0 flex-col gap-3 pt-1">
          <SideTab className="h-[97px]" label="标签交叉索引*" icon={<Shuffle className="size-3 text-[#222]" strokeWidth={2.5} />} />
          <SideTab className="h-[74px]" label="对象视图" icon={<Svg className="size-3 text-[#777]"><path d="M2 4l3 1V2l3 2 3-2v3l3 1-2 2 2 3h-3v3l-3-2-3 2v-3H2l2-3z" fill="#fff" /></Svg>} />
        </div>
        <div className="flex min-w-0 flex-1 flex-col">
          <div className="flex min-h-0 flex-1 gap-[3px]">
            <ProjectPanel />
            <Editor />
          </div>
          <StatusBar />
        </div>
        <div className="ml-[3px] flex">
          <Gallery />
        </div>
        <div className="flex w-[17px] shrink-0 flex-col items-end pt-1">
          <SideTab className="h-[88px]" label="工具库/控件" icon={<Svg className="size-3 text-[#333]"><path d="M3 2c-3 4-3 7 0 11M13 2c3 4 3 7 0 11M5 4h6v8H5zM8 4v8" strokeWidth="2" /></Svg>} />
        </div>
      </div>
    </div>
  )
}

export default App
